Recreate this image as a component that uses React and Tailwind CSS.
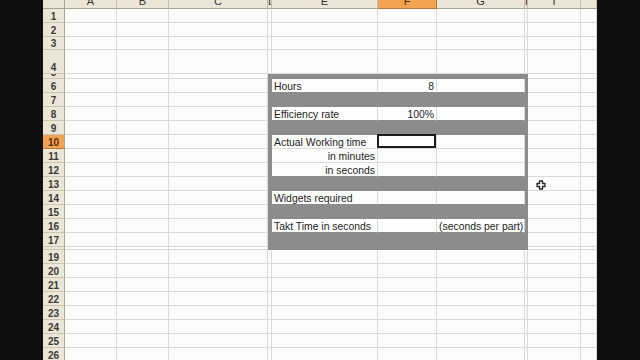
const cols = [
  { k: 'A' },
  { k: 'B' },
  { k: 'C' },
  { k: 'D' },
  { k: 'E' },
  { k: 'F' },
  { k: 'G' },
  { k: 'H' },
  { k: 'I' },
  { k: 'J', label: '' },
];

const rowHeights = {
  3: 'h-[13px]',
  4: 'h-[24px]',
  5: 'h-[5px]',
  18: 'h-[3px]',
};

const rows = Array.from({ length: 26 }, (_, i) => i + 1);

const block = ['D', 'E', 'F', 'G', 'H'];
const inner = ['E', 'F', 'G'];
const whiteRows = [6, 8, 10, 11, 12, 14, 16];

const cells = {
  '6E': { t: 'Hours' },
  '6F': { t: '8', right: true },
  '8E': { t: 'Efficiency rate' },
  '8F': { t: '100%', right: true },
  '10E': { t: 'Actual Working time' },
  '11E': { t: 'in minutes', right: true },
  '12E': { t: 'in seconds', right: true },
  '14E': { t: 'Widgets required' },
  '16E': { t: 'Takt Time in seconds' },
  '16G': { t: '(seconds per part)' },
};

const Cell = ({ row, col }) => {
  const inBlock = row >= 5 && row <= 18 && block.includes(col);
  const white = whiteRows.includes(row) && inner.includes(col);
  const nextWhite = whiteRows.includes(row + 1);
  const content = cells[`${row}${col}`];

  let cls = 'relative min-w-0 border-r border-b ';
  if (white) {
    cls += 'bg-[#fdfdfd] border-r-[#d8d8d8] ';
    cls += nextWhite ? 'border-b-[#dcdcdc]' : 'border-b-[#8c8c8c]';
  } else if (inBlock) {
    cls += 'bg-[#8c8c8c] border-[#8c8c8c]';
  } else {
    cls += 'bg-[#fcfcfc] border-[#dadada]';
  }

  return (
    <div className={cls}>
      {content && (
        <div
          className={`absolute inset-x-[2px] -bottom-[1px] whitespace-nowrap text-[10.4px] leading-[12px] text-[#1e1e1e] ${
            content.right ? 'text-right' : ''
          }`}
        >
          {content.t}
        </div>
      )}
      {row === 10 && col === 'F' && (
        <div className="absolute -left-[1px] -top-[1px] right-0 bottom-0 border-2 border-[#1c1c1c]" />
      )}
    </div>
  );
};

export default function App() {
  return (
    <div
      className="relative w-[640px] h-[360px] overflow-hidden bg-[#0f0f0f] pl-[43px]"
      style={{ fontFamily: '"Liberation Sans", Arial, sans-serif' }}
    >
      <div className="w-[554px] h-[360px] overflow-hidden">
        {/* column headers */}
        <div className="grid grid-cols-[22px_52px_52px_99px_4px_106px_59px_88px_3px_53px_16px] h-[9px]">
          <div className="bg-[#ebe6d6] border-r border-b border-[#a9a594]" />
          {cols.map((c) => (
            <div
              key={c.k}
              className={`flex justify-center overflow-hidden border-r border-b ${
                c.k === 'F'
                  ? 'bg-[#f1a352] border-[#b47a3c] text-[#5a2f0a]'
                  : 'bg-[#ebe6d6] border-r-[#c4bfae] border-b-[#a9a594] text-[#333]'
              } ${c.k === 'D' || c.k === 'H' ? 'justify-start' : ''}`}
            >
              <span className="-mt-[5px] text-[11px] leading-[12px]">
                {c.label ?? c.k}
              </span>
            </div>
          ))}
        </div>

        {rows.map((r) => (
          <div
            key={r}
            className={`grid grid-cols-[22px_52px_52px_99px_4px_106px_59px_88px_3px_53px_16px] ${
              rowHeights[r] || 'h-[14px]'
            }`}
          >
            <div
              className={`flex items-end justify-center overflow-hidden border-r border-b ${
                r === 10
                  ? 'bg-[#f1a352] border-b-[#b47a3c] border-r-[#a9a594] text-[#5a2f0a]'
                  : 'bg-[#ebe6d6] border-b-[#cbc6b5] border-r-[#a9a594] text-[#3a3a3a]'
              }`}
            >
              <span className="-mb-[1px] text-[10px] font-bold leading-[12px]">{r}</span>
            </div>
            {cols.map((c) => (
              <Cell key={c.k} row={r} col={c.k} />
            ))}
          </div>
        ))}
      </div>

      {/* mouse cursor */}
      <svg
        className="absolute left-[536px] top-[180px]"
        width="10"
        height="10"
        viewBox="0 0 10 10"
      >
        <path
          d="M3.5 1h3v2.5H9v3H6.5V9h-3V6.5H1v-3h2.5z"
          fill="#fff"
          stroke="#222"
          strokeWidth="1.3"
          strokeLinejoin="round"
        />
      </svg>
    </div>
  );
}
